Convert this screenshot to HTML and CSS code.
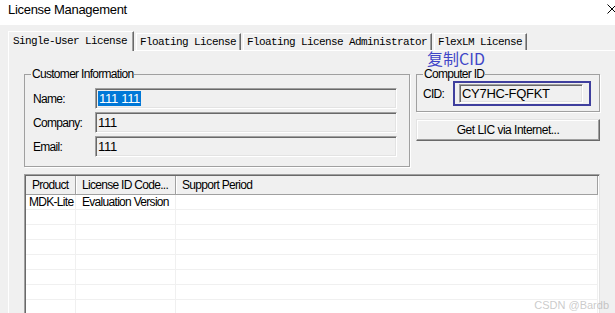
FILE: index.html
```html
<!DOCTYPE html>
<html lang="en">

<head>
    <meta charset="UTF-8" />
    <title>License Management</title>
    <link rel="stylesheet" href="styles.css">
</head>

<body>
    <div class="window">
        <div class="titlebar">
            <span class="title">License Management</span>
            <svg class="close" width="10" height="10" viewBox="0 0 10 10">
                <path d="M0.5 0.5 L9.5 9.5 M9.5 0.5 L0.5 9.5" stroke="#000" stroke-width="1" fill="none" />
            </svg>
        </div>

        <div class="tabs">
            <div class="tab active">Single-User License</div>
            <div class="tab">Floating License</div>
            <div class="tab">Floating License Administrator</div>
            <div class="tab">FlexLM License</div>
        </div>

        <div class="page">
            <div class="top-row">
                <fieldset class="group customer">
                    <legend>Customer Information</legend>
                    <div class="field">
                        <label>Name:</label>
                        <div class="edit"><span class="sel">111 111</span></div>
                    </div>
                    <div class="field">
                        <label>Company:</label>
                        <div class="edit">111</div>
                    </div>
                    <div class="field">
                        <label>Email:</label>
                        <div class="edit">111</div>
                    </div>
                </fieldset>

                <div class="side">
                    <div class="note">复制CID</div>
                    <fieldset class="group computer">
                        <legend>Computer ID</legend>
                        <div class="cid-row">
                            <label>CID:</label>
                            <div class="mark">
                                <div class="edit cid">CY7HC-FQFKT</div>
                            </div>
                        </div>
                    </fieldset>
                    <button class="btn">Get LIC via Internet...</button>
                </div>
            </div>

            <div class="list">
                <div class="list-inner">
                    <div class="list-head">
                        <div class="col c1">Product</div>
                        <div class="col c2">License ID Code...</div>
                        <div class="col c3">Support Period</div>
                    </div>
                    <div class="row">
                        <div class="col c1">MDK-Lite</div>
                        <div class="col c2">Evaluation Version</div>
                        <div class="col c3"></div>
                    </div>
                    <div class="row"><div class="col c1"></div><div class="col c2"></div><div class="col c3"></div></div>
                    <div class="row"><div class="col c1"></div><div class="col c2"></div><div class="col c3"></div></div>
                    <div class="row"><div class="col c1"></div><div class="col c2"></div><div class="col c3"></div></div>
                    <div class="row"><div class="col c1"></div><div class="col c2"></div><div class="col c3"></div></div>
                    <div class="row"><div class="col c1"></div><div class="col c2"></div><div class="col c3"></div></div>
                    <div class="row"><div class="col c1"></div><div class="col c2"></div><div class="col c3"></div></div>
                    <div class="row"><div class="col c1"></div><div class="col c2"></div><div class="col c3"></div></div>
                    <div class="row"><div class="col c1"></div><div class="col c2"></div><div class="col c3"></div></div>
                </div>
            </div>
        </div>

        <div class="watermark">CSDN @Bardb</div>
    </div>
</body>

</html>
```

FILE: styles.css
```css
body {
    margin: 0;
    background: #f0f0f0;
    font-family: "Liberation Sans", Arial, sans-serif;
    font-size: 12px;
    letter-spacing: -0.7px;
    color: #000;
    overflow: hidden;
}

.window {
    position: relative;
    height: 313px;
    overflow: hidden;
}

/* title bar */
.titlebar {
    height: 25px;
    background: #fff;
    display: flex;
    align-items: flex-start;
    justify-content: space-between;
    padding-left: 8px;
}

.title {
    font-size: 13px;
    letter-spacing: -0.3px;
    line-height: 16px;
    padding-top: 2px;
}

.close {
    margin-top: 4px;
    margin-right: -2px;
}

/* tabs */
.tabs {
    display: flex;
    align-items: flex-end;
    gap: 2px;
    height: 25px;
    padding-left: 8px;
}

.tab {
    font-family: "Liberation Mono", "DejaVu Sans Mono", monospace;
    font-size: 11px;
    letter-spacing: -0.6px;
    line-height: 16px;
    padding: 0 4px 0 3px;
    border-top: 1px solid #fff;
    border-left: 1px solid #fff;
    border-right: 1px solid #696969;
    box-shadow: inset -1px 0 #a0a0a0;
}

.tab.active {
    position: relative;
    z-index: 1;
    background: #f0f0f0;
    padding: 1px 6px 2px 4px;
    margin-bottom: -1px;
}

.page {
    margin-left: 8px;
    border-top: 1px solid #fff;
    border-left: 1px solid #fff;
    padding-left: 15px;
    height: 300px;
}

.top-row {
    display: flex;
    align-items: flex-start;
    gap: 6px;
}

/* group boxes */
.group {
    margin: 0;
    padding: 0;
    min-width: 0;
    border: 1px solid #a0a0a0;
    box-shadow: 1px 1px 0 #fff;
}

.group legend {
    padding: 0 1px;
    margin-left: 6px;
    line-height: 14px;
}

.customer {
    width: 386px;
    box-sizing: border-box;
    margin-top: 16px;
    padding: 7px 0 9px 0;
    display: flex;
    flex-direction: column;
    gap: 3px;
}

.field {
    display: flex;
    align-items: center;
    padding-left: 8px;
}

.field label {
    width: 62px;
}

.edit {
    box-sizing: border-box;
    height: 21px;
    width: 302px;
    border-top: 1px solid #a0a0a0;
    border-left: 1px solid #a0a0a0;
    border-right: 1px solid #fff;
    border-bottom: 1px solid #fff;
    box-shadow: inset 1px 1px 0 #696969, inset -1px -1px 0 #e3e3e3;
    padding: 2px 0 0 2px;
    font-size: 13px;
    line-height: 16px;
    letter-spacing: -0.3px;
}

.sel {
    background: #0078d7;
    color: #fff;
    padding: 0 1px;
}

.side {
    width: 184px;
    display: flex;
    flex-direction: column;
}

.note {
    font-family: "Noto Sans CJK SC", "Liberation Sans", sans-serif;
    font-size: 16px;
    line-height: 15px;
    height: 15px;
    margin-bottom: 1px;
    letter-spacing: 0;
    color: #4046c8;
    margin-left: 11px;
}

.computer {
    padding: 0 0 5px 0;
}

.cid-row {
    display: flex;
    align-items: center;
    padding-left: 6px;
}

.cid-row label {
    width: 30px;
}

.mark {
    border: 2px solid #3f3f9e;
    padding: 1px 6px 1px 4px;
}

.edit.cid {
    width: 124px;
    height: 19px;
    padding-top: 1px;
}

.btn {
    margin-top: 7px;
    height: 22px;
    width: 184px;
    background: #f0f0f0;
    border: 1px solid;
    border-color: #e3e3e3 #696969 #696969 #e3e3e3;
    box-shadow: inset -1px -1px 0 #a0a0a0, inset 1px 1px 0 #fff;
    font-family: "Liberation Sans", Arial, sans-serif;
    font-size: 12px;
    letter-spacing: -0.5px;
    color: #000;
    padding: 0;
}

/* list view */
.list {
    margin-top: 7px;
    width: 574px;
    height: 160px;
    border-top: 1px solid #a0a0a0;
    border-left: 1px solid #a0a0a0;
    border-right: 1px solid #e3e3e3;
    background: #fff;
}

.list-inner {
    border-top: 1px solid #696969;
    border-left: 1px solid #696969;
    height: 100%;
}

.list-head {
    display: flex;
    height: 18px;
    background: #f0f0f0;
    border-bottom: 1px solid #a0a0a0;
    border-right: 1px solid #a0a0a0;
    margin-right: 1px;
}

.list-head .col {
    padding-left: 6px;
    line-height: 18px;
    border-right: 1px solid #a0a0a0;
    box-shadow: 1px 0 0 #fff;
}

.list-head .c3 {
    border-right: none;
    box-shadow: none;
}

.row {
    display: flex;
    height: 14px;
    border-bottom: 1px solid #f0f0f0;
    border-right: 1px solid #f0f0f0;
    margin-right: 1px;
}

.row .col {
    line-height: 14px;
    padding-left: 6px;
    border-right: 1px solid #f0f0f0;
}

.row .c1 {
    padding-left: 3px;
}

.col {
    box-sizing: border-box;
    white-space: nowrap;
    overflow: hidden;
}

.c1 {
    width: 50px;
}

.c2 {
    width: 100px;
}

.c3 {
    flex: 1;
    border-right: none;
}

.row .c3 {
    border-right: none;
}

.watermark {
    position: absolute;
    right: 6px;
    bottom: 2px;
    font-size: 11px;
    letter-spacing: 0;
    color: rgba(150, 150, 150, 0.5);
}
```
